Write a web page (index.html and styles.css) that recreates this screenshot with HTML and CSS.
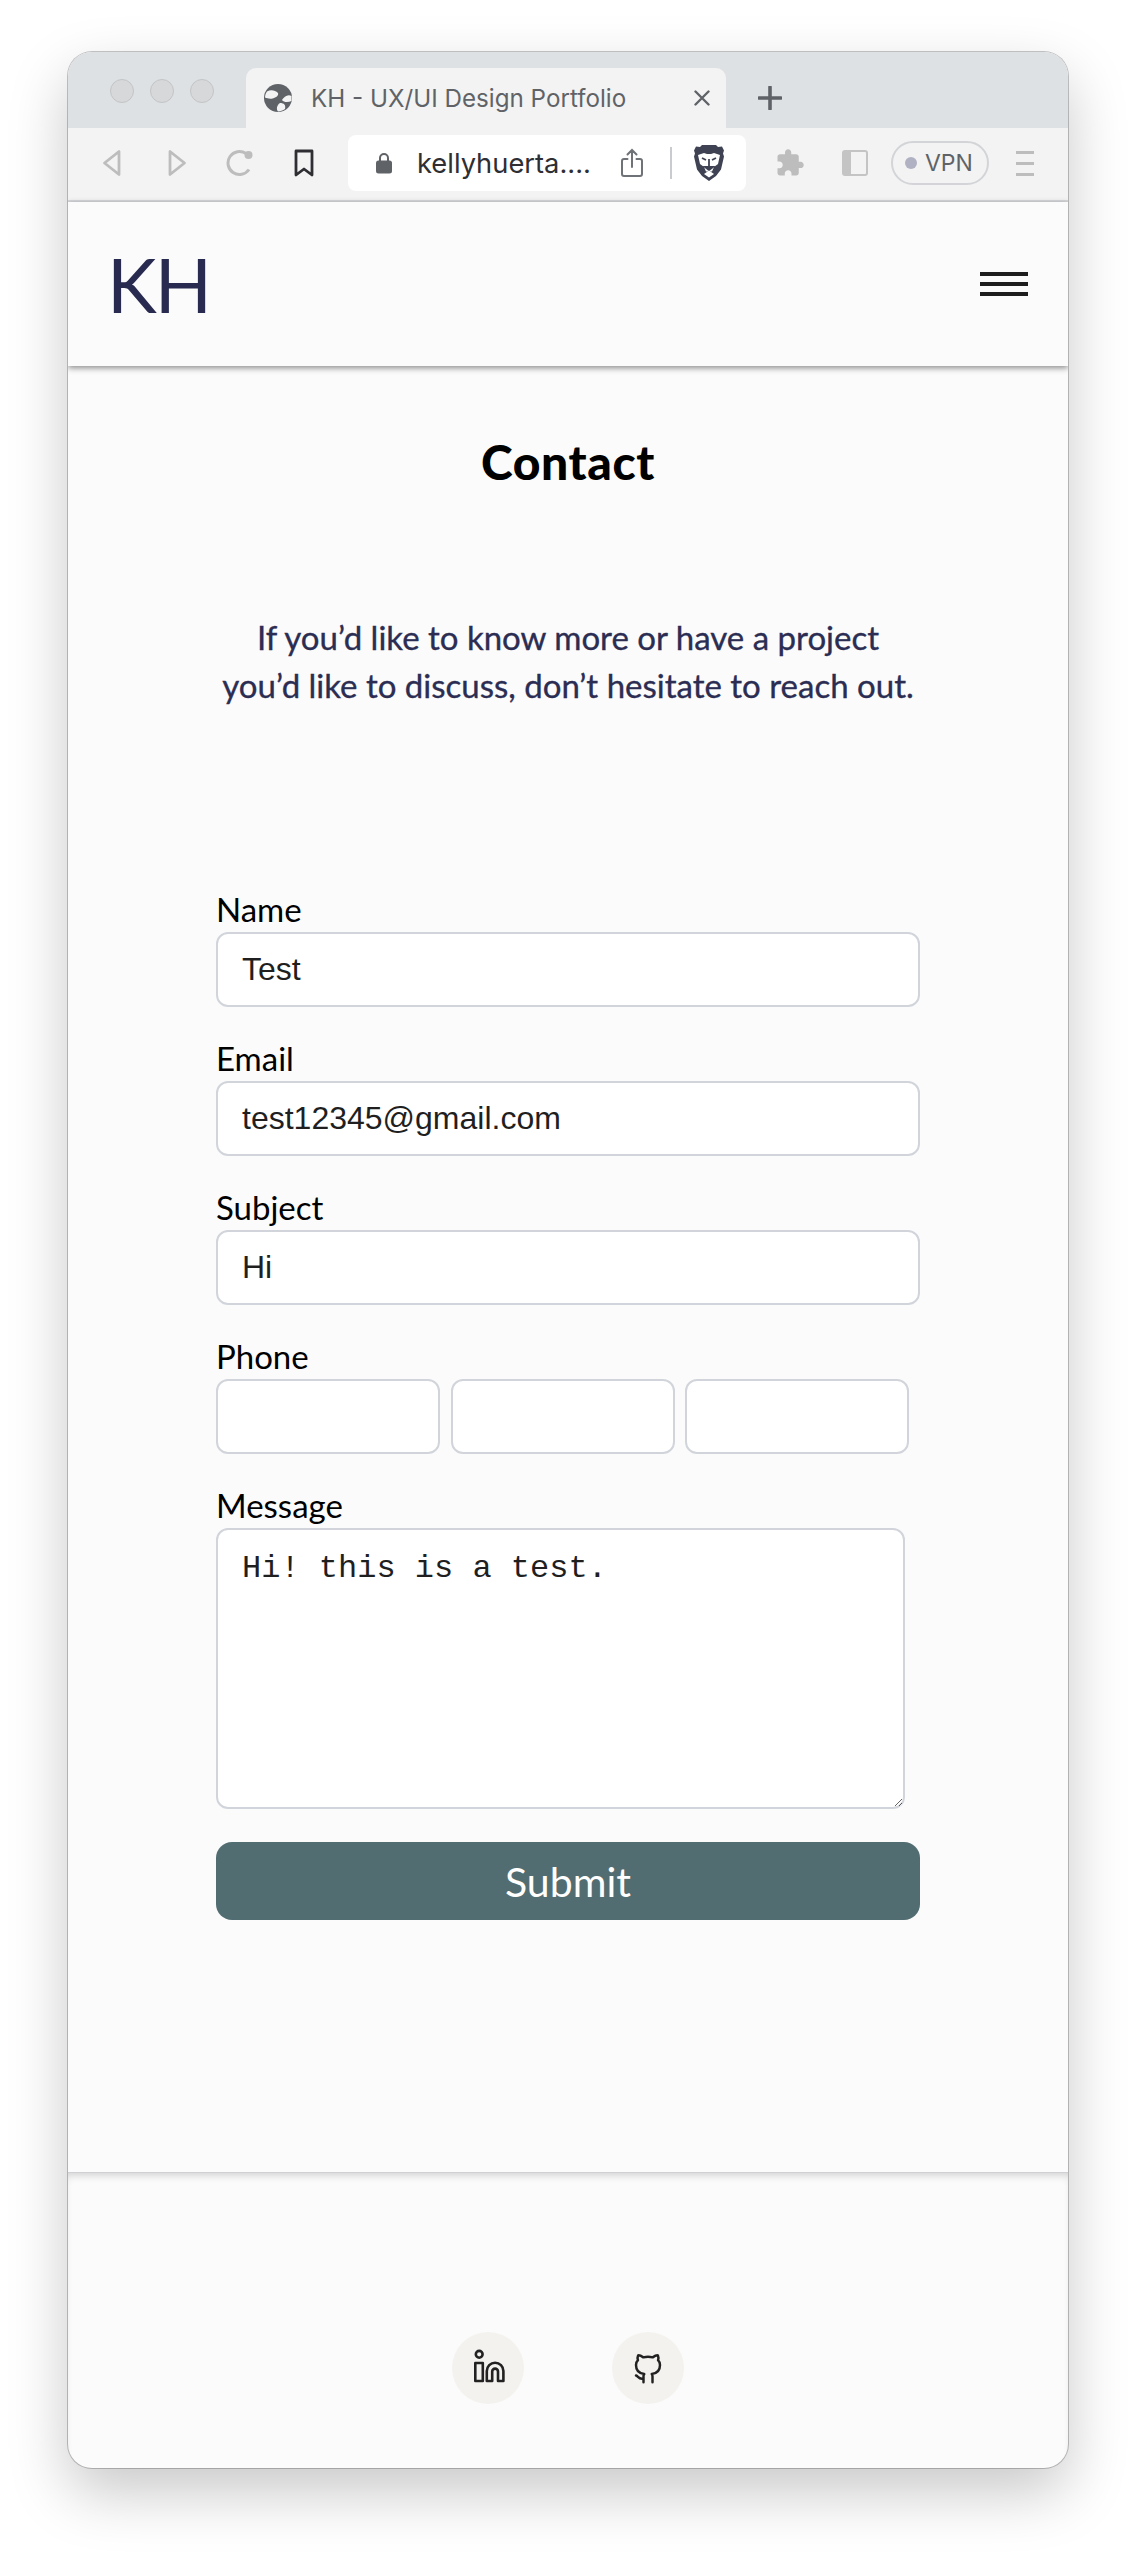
FILE: index.html
```html
<!DOCTYPE html>
<html lang="en">
<head>
<meta charset="utf-8">
<title>KH - UX/UI Design Portfolio</title>
<link rel="stylesheet" href="styles.css">
</head>
<body>
<div class="window">
  <div class="tabstrip">
    <div class="lights"><span class="light"></span><span class="light"></span><span class="light"></span></div>
    <div class="tab">
      <svg class="globe" viewBox="0 0 28 28"><circle cx="14" cy="14" r="14" fill="#5f6368"/><path d="M3 7.500C6.500 5.500 11 6 14 9c1 3-3 5-5.500 5.500-2.500.5-5.500 0-7.500-1 0-2 .8-4.500 2-6zM27.500 12C23.500 10 20 13 18 16c2 2.500 6 2.500 9.500 1zM16 19c4 0 6 2 5 6-2 1.500-5 2.500-7 2.500-2-2.500-1-6.500 2-8.500z" fill="#f3f3f3"/></svg>
      <span class="tab-title">KH - UX/UI Design Portfolio</span>
      <svg class="tab-x" viewBox="0 0 16 16"><path d="M1.500 1.500l13 13M14.500 1.500l-13 13" stroke="#5f6368" stroke-width="2.400" stroke-linecap="round"/></svg>
    </div>
    <svg class="tab-plus" viewBox="0 0 24 24"><path d="M12 1v22M1 12h22" stroke="#5f6368" stroke-width="3.600" stroke-linecap="round"/></svg>
  </div>
  <div class="toolbar">
    <svg class="ti ti-back" viewBox="0 0 20 28"><path d="M17 2.500v23L2.500 14z" fill="none" stroke="#bdbdbd" stroke-width="2.800" stroke-linejoin="round"/></svg>
    <svg class="ti ti-fwd" viewBox="0 0 20 28"><path d="M3 2.500v23L17.500 14z" fill="none" stroke="#bdbdbd" stroke-width="2.800" stroke-linejoin="round"/></svg>
    <svg class="ti ti-reload" viewBox="0 0 28 28"><path d="M23 20.500A11.500 11.500 0 1 1 20 4.500" fill="none" stroke="#bdbdbd" stroke-width="3"/><circle cx="22.500" cy="6" r="4" fill="#bdbdbd"/></svg>
    <svg class="ti ti-mark" viewBox="0 0 20 28"><path d="M2 2h16v24l-8-6-8 6z" fill="none" stroke="#2e2e33" stroke-width="2.800" stroke-linejoin="round"/></svg>
    <div class="urlbox">
      <svg class="lock" viewBox="0 0 16 22"><path d="M4 9V6a4 4 0 0 1 8 0v3" fill="none" stroke="#5f6368" stroke-width="2"/><rect y="8.500" width="16" height="13" rx="2.500" fill="#5f6368"/></svg>
      <span class="url">kellyhuerta....</span>
      <svg class="share" viewBox="0 0 22 30"><path d="M6.500 11H3a2 2 0 0 0-2 2v13a2 2 0 0 0 2 2h16a2 2 0 0 0 2-2V13a2 2 0 0 0-2-2h-3.500M11 19V2M6.500 6.500L11 2l4.500 4.500" fill="none" stroke="#6f7276" stroke-width="2" stroke-linecap="round"/></svg>
      <span class="divider"></span>
      <svg class="lion" viewBox="0 0 30 36"><path d="M8 0h14l2 2 4-.5 2 4-1 3 1 3-3 13-5 6.500L15 36l-7-5-5-6.500L0 11.500l1-3-1-3 2-4 4 .5z" fill="#3f4252"/><path d="M4 10l6-2 3 1h4l3-1 6 2-2 9-4 3-2 4.500h-6l-2-4.500-4-3z" fill="#fff"/><path d="M8 13l4 2M22 13l-4 2M15 14v7M11 22h8l-4 3z" stroke="#3f4252" stroke-width="1.800" fill="#3f4252"/><path d="M10 29l5-3.500 5 3.500-5 3.500z" fill="#fff"/></svg>
    </div>
    <svg class="ti ti-puzzle" viewBox="0 0 24 24"><path fill="#bdbdbd" d="M20.500 11H19V7c0-1.100-.9-2-2-2h-4V3.500C13 2.120 11.880 1 10.500 1S8 2.120 8 3.500V5H4c-1.100 0-1.990.9-1.990 2v3.800H3.500c1.490 0 2.700 1.210 2.700 2.700s-1.210 2.700-2.700 2.700H2V20c0 1.100.9 2 2 2h3.800v-1.500c0-1.490 1.210-2.700 2.700-2.700 1.490 0 2.700 1.210 2.700 2.700V22H17c1.100 0 2-.9 2-2v-4h1.500c1.380 0 2.500-1.120 2.500-2.500S21.880 11 20.500 11z"/></svg>
    <svg class="ti ti-side" viewBox="0 0 26 26"><rect x="1" y="1" width="24" height="24" rx="2" fill="none" stroke="#c4c4c4" stroke-width="2"/><rect x="1" y="1" width="8" height="24" fill="#c4c4c4"/></svg>
    <div class="vpn"><span class="vpn-dot"></span><span class="vpn-text">VPN</span></div>
    <div class="kebab"><span></span><span></span><span></span></div>
  </div>
  <header class="site-head">
    <div class="logo">KH</div>
    <button class="burger" aria-label="Menu"><span></span><span></span><span></span></button>
  </header>
  <main class="content">
    <h1 class="title">Contact</h1>
    <p class="lead">If you’d like to know more or have a project<br>you’d like to discuss, don’t hesitate to reach out.</p>
    <form class="form">
      <label class="label">Name</label>
      <input class="field" type="text" value="Test">
      <label class="label">Email</label>
      <input class="field" type="text" value="test12345@gmail.com">
      <label class="label">Subject</label>
      <input class="field" type="text" value="Hi">
      <label class="label">Phone</label>
      <div class="phones">
        <input class="field phone" type="text">
        <input class="field phone" type="text">
        <input class="field phone" type="text">
      </div>
      <label class="label">Message</label>
      <textarea class="message">Hi! this is a test.</textarea>
      <button class="submit" type="button">Submit</button>
    </form>
  </main>
  <footer class="site-foot">
    <a class="social"><svg viewBox="0 0 72 72"><g fill="none" stroke="#222" stroke-width="2.600" stroke-linejoin="round"><rect x="23.300" y="31" width="7.500" height="18"/><circle cx="27.200" cy="22.300" r="3.400"/><path d="M34.800 49V39a8.300 8.300 0 0 1 16.600 0v10H46V39.500a2.900 2.900 0 0 0-5.800 0V49z"/></g></svg></a>
    <a class="social"><svg viewBox="0 0 24 24" class="gh"><path fill="none" stroke="#222" stroke-width="1.650" stroke-linecap="round" stroke-linejoin="round" d="M9 19c-3 1-3.500-1.500-5-2m11 4.500V18c0-1 .1-1.400-.5-2 2.800-.3 5.500-1.400 5.500-6a4.600 4.600 0 0 0-1.300-3.200 4.200 4.200 0 0 0-.1-3.200s-1.100-.3-3.500 1.300a12.300 12.300 0 0 0-6.200 0C6.500 3.300 5.400 3.600 5.400 3.600a4.200 4.200 0 0 0-.1 3.200A4.600 4.600 0 0 0 4 10c0 4.600 2.700 5.700 5.500 6-.6.600-.6 1.200-.5 2v3.500"/></svg></a>
  </footer>
</div>
</body>
</html>
```
FILE: styles.css
```css
* { box-sizing: border-box; }
html, body { margin: 0; padding: 0; background: #fff; }
body { height: 2552px; overflow: hidden; padding: 52px 68px 0; font-family: "Lato", "Liberation Sans", sans-serif; }

.window {
  width: 1000px;
  height: 2416px;
  border-radius: 24px;
  background: #fbfbfb;
  overflow: hidden;
  box-shadow: 0 0 0 1px rgba(0,0,0,.22), 0 24px 60px rgba(0,0,0,.22);
  display: flex;
  flex-direction: column;
}

/* tab strip */
.tabstrip { height: 76px; background: #dee1e4; display: flex; align-items: flex-end; flex: none; }
.lights { display: flex; gap: 16px; padding-left: 42px; width: 178px; align-self: flex-start; padding-top: 27px; }
.light { width: 24px; height: 24px; border-radius: 50%; background: #d7d8d9; border: 1px solid #c3c4c5; }
.tab { width: 480px; height: 60px; background: #f3f3f3; border-radius: 10px 10px 0 0; display: flex; align-items: center; padding: 0 16px 0 18px; font-family: "Inter", "Liberation Sans", sans-serif; }
.globe { width: 28px; height: 28px; flex: none; }
.tab-title { margin-left: 19px; font-size: 24.200px; color: #5f6368; flex: 1; white-space: nowrap; }
.tab-x { width: 16px; height: 16px; flex: none; }
.tab-plus { width: 24px; height: 24px; margin: 0 0 18px 32px; }

/* toolbar */
.toolbar { height: 74px; background: #f3f3f3; border-bottom: 2px solid #d8d9dc; display: flex; align-items: center; flex: none; padding-bottom: 2px; }
.ti { flex: none; display: block; }
.ti-back { width: 20px; height: 28px; margin-left: 34px; }
.ti-fwd { width: 20px; height: 28px; margin-left: 45px; }
.ti-reload { width: 28px; height: 28px; margin-left: 39px; }
.ti-mark { width: 20px; height: 28px; margin-left: 40px; }
.urlbox { width: 398px; height: 56px; margin-left: 34px; background: #fff; border-radius: 8px; display: flex; align-items: center; flex: none; font-family: "Inter", "Liberation Sans", sans-serif; }
.lock { width: 16px; height: 22px; margin-left: 28px; flex: none; }
.url { margin-left: 25px; font-size: 27.300px; color: #2e2e33; width: 191px; white-space: nowrap; }
.share { width: 22px; height: 30px; margin-left: 13px; flex: none; }
.divider { width: 2px; height: 32px; background: #c9cbce; margin-left: 27px; flex: none; }
.lion { width: 30px; height: 36px; margin-left: 22px; flex: none; }
.ti-puzzle { width: 30px; height: 30px; margin-left: 29px; }
.ti-side { width: 26px; height: 26px; margin-left: 37px; }
.vpn { width: 98px; height: 44px; margin-left: 23px; border: 2px solid #d2d4d7; border-radius: 22px; display: flex; align-items: center; padding-left: 12px; flex: none; font-family: "Inter", "Liberation Sans", sans-serif; }
.vpn-dot { width: 12px; height: 12px; border-radius: 50%; background: #b0b2c4; }
.vpn-text { font-size: 23px; color: #5f6368; margin-left: 8px; }
.kebab { width: 18px; margin-left: 27px; display: flex; flex-direction: column; gap: 8px; flex: none; }
.kebab span { height: 3px; background: #bdbdbd; display: block; }

/* site header */
.site-head { height: 164px; background: #fbfbfb; display: flex; align-items: center; justify-content: space-between; padding: 0 40px 0 39px; flex: none; box-shadow: 0 2px 6px rgba(0,0,0,.45); position: relative; }
.logo { font-size: 75px; font-weight: 400; letter-spacing: -2px; color: #282b4f; line-height: 1; }
.burger { width: 48px; padding: 0; border: 0; background: none; display: flex; flex-direction: column; gap: 6px; }
.burger span { display: block; height: 4px; background: #1d1d1d; }

/* main */
.content { flex: 1; display: flex; flex-direction: column; align-items: center; }
.title { margin: 66px 0 0; font-size: 48px; letter-spacing: .6px; line-height: 60px; font-weight: 900; color: #000; }
.lead { margin: 121px 0 0; font-size: 33px; line-height: 48px; font-weight: 400; text-align: center; color: #2b2d52; -webkit-text-stroke: .35px #2b2d52; }
.form { width: 704px; margin-top: 185px; display: flex; flex-direction: column; align-items: flex-start; }
.label { font-size: 33px; line-height: 30px; color: #000; display: block; height: 38px; margin-top: 36px; }
.label:first-child { margin-top: 0; }
.field { width: 704px; height: 75px; border: 2px solid #d1d5db; border-radius: 12px; background: #fff; padding: 0 24px; font-family: "Liberation Sans", Arial, sans-serif; font-size: 32px; color: #1f1f1f; outline: 0; display: block; }
.phones { display: flex; gap: 10.500px; }
.phone { width: 224px; }
.message { width: 689px; height: 281px; border: 2px solid #d1d5db; border-radius: 12px; background: #fff; padding: 20px 24px; font-family: "Liberation Mono", "Courier New", monospace; font-size: 32px; line-height: 38px; color: #1f1f1f; outline: 0; display: block; resize: vertical; }
.submit { width: 704px; height: 78px; margin-top: 33px; border: 0; border-radius: 16px; background: #526d71; color: #fff; font-family: "Lato", "Liberation Sans", sans-serif; font-size: 41px; }

/* footer */
.site-foot { height: 296px; flex: none; border-top: 1px solid #cfd0d4; box-shadow: inset 0 6px 8px -4px rgba(0,0,0,.18); display: flex; justify-content: center; gap: 88px; padding-top: 159px; }
.social { width: 72px; height: 72px; border-radius: 50%; background: #f3f2ee; display: flex; align-items: center; justify-content: center; }
.social svg { width: 72px; height: 72px; display: block; }
.social svg.gh { width: 36px; height: 36px; }
```
